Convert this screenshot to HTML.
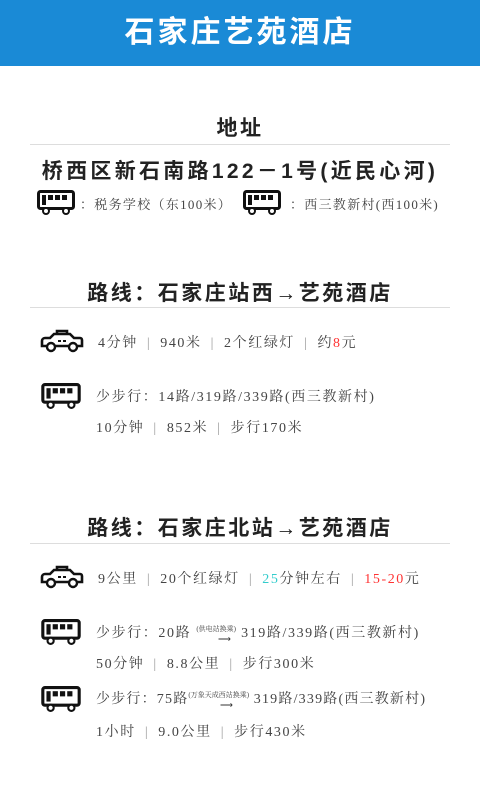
<!DOCTYPE html><html><head><meta charset="utf-8"><style>
body{margin:0;width:480px;height:800px;background:#fff;position:relative;overflow:hidden;font-family:"Liberation Serif","Noto Serif CJK SC",serif;color:#333}
.hd{position:absolute;left:0;top:0;width:480px;height:66px;background:#1a8ad6;color:#fff;font:bold 30px "Liberation Sans","Noto Sans CJK SC",sans-serif;text-align:center;line-height:66px;letter-spacing:3px}
.a{position:absolute;white-space:nowrap}
.h{font:bold 21px "Liberation Sans","Noto Sans CJK SC",sans-serif;color:#222;left:0;width:480px;text-align:center;letter-spacing:2.5px}
.ln{position:absolute;left:30px;width:420px;height:1px;background:#ddd}
.t{font-size:14px;color:#444;letter-spacing:1.6px}
.s{color:#999;margin:0 9px}
.sm{font-size:7px;position:relative;top:-6px;letter-spacing:0}
</style></head><body>
<div class="hd">石家庄艺苑酒店</div>
<div class="a h" style="top:112px">地址</div>
<div class="ln" style="top:144px"></div>
<div class="a h" style="top:155px;font-size:21px;letter-spacing:3.3px">桥西区新石南路122－1号(近民心河)</div>
<svg class="a" style="left:37px;top:190px" width="38" height="26" viewBox="0 0 38 26"><rect x="1.5" y="1.5" width="35" height="17" rx="2" fill="none" stroke="#111" stroke-width="3"/><rect x="5" y="5" width="4" height="10" fill="#111"/><rect x="11" y="5" width="5" height="5" fill="#111"/><rect x="18" y="5" width="5" height="5" fill="#111"/><rect x="25" y="5" width="5" height="5" fill="#111"/><circle cx="9" cy="21" r="3" fill="#fff" stroke="#111" stroke-width="2"/><circle cx="29" cy="21" r="3" fill="#fff" stroke="#111" stroke-width="2"/></svg>
<div class="a t" style="left:80px;top:194px;font-size:13px;letter-spacing:1.3px">：税务学校（东100米）</div>
<svg class="a" style="left:243px;top:190px" width="38" height="26" viewBox="0 0 38 26"><rect x="1.5" y="1.5" width="35" height="17" rx="2" fill="none" stroke="#111" stroke-width="3"/><rect x="5" y="5" width="4" height="10" fill="#111"/><rect x="11" y="5" width="5" height="5" fill="#111"/><rect x="18" y="5" width="5" height="5" fill="#111"/><rect x="25" y="5" width="5" height="5" fill="#111"/><circle cx="9" cy="21" r="3" fill="#fff" stroke="#111" stroke-width="2"/><circle cx="29" cy="21" r="3" fill="#fff" stroke="#111" stroke-width="2"/></svg>
<div class="a t" style="left:290px;top:194px;font-size:13px;letter-spacing:1.3px">：西三教新村(西100米)</div>

<div class="a h" style="top:277px">路线：石家庄站西→艺苑酒店</div>
<div class="ln" style="top:307px"></div>
<svg class="a" style="left:40px;top:328px" width="44" height="25" viewBox="0 0 44 25"><path d="M17 6V3h10v3M10 10l4-4h16l4 4h6a2 2 0 0 1 2 2v6H2v-5a3 3 0 0 1 3-3z" fill="none" stroke="#111" stroke-width="2.6"/><rect x="18" y="12" width="3" height="2" fill="#111"/><rect x="23" y="12" width="3" height="2" fill="#111"/><circle cx="11" cy="19" r="4" fill="#fff" stroke="#111" stroke-width="2.4"/><circle cx="33" cy="19" r="4" fill="#fff" stroke="#111" stroke-width="2.4"/></svg>
<div class="a t" style="left:98px;top:332px">4分钟<span class="s">|</span>940米<span class="s">|</span>2个红绿灯<span class="s">|</span>约<span style="color:#f33">8</span>元</div>
<svg class="a" style="left:41px;top:383px" width="40" height="27" viewBox="0 0 38 26"><rect x="1.5" y="1.5" width="35" height="17" rx="2" fill="none" stroke="#111" stroke-width="3"/><rect x="5" y="5" width="4" height="10" fill="#111"/><rect x="11" y="5" width="5" height="5" fill="#111"/><rect x="18" y="5" width="5" height="5" fill="#111"/><rect x="25" y="5" width="5" height="5" fill="#111"/><circle cx="9" cy="21" r="3" fill="#fff" stroke="#111" stroke-width="2"/><circle cx="29" cy="21" r="3" fill="#fff" stroke="#111" stroke-width="2"/></svg>
<div class="a t" style="left:96px;top:386px">少步行：14路/319路/339路(西三教新村)</div>
<div class="a t" style="left:96px;top:417px">10分钟<span class="s">|</span>852米<span class="s">|</span>步行170米</div>

<div class="a h" style="top:512px">路线：石家庄北站→艺苑酒店</div>
<div class="ln" style="top:543px"></div>
<svg class="a" style="left:40px;top:564px" width="44" height="25" viewBox="0 0 44 25"><path d="M17 6V3h10v3M10 10l4-4h16l4 4h6a2 2 0 0 1 2 2v6H2v-5a3 3 0 0 1 3-3z" fill="none" stroke="#111" stroke-width="2.6"/><rect x="18" y="12" width="3" height="2" fill="#111"/><rect x="23" y="12" width="3" height="2" fill="#111"/><circle cx="11" cy="19" r="4" fill="#fff" stroke="#111" stroke-width="2.4"/><circle cx="33" cy="19" r="4" fill="#fff" stroke="#111" stroke-width="2.4"/></svg>
<div class="a t" style="left:98px;top:568px">9公里<span class="s">|</span>20个红绿灯<span class="s">|</span><span style="color:#3cc">25</span>分钟左右<span class="s">|</span><span style="color:#f33">15-20</span>元</div>
<svg class="a" style="left:41px;top:619px" width="40" height="27" viewBox="0 0 38 26"><rect x="1.5" y="1.5" width="35" height="17" rx="2" fill="none" stroke="#111" stroke-width="3"/><rect x="5" y="5" width="4" height="10" fill="#111"/><rect x="11" y="5" width="5" height="5" fill="#111"/><rect x="18" y="5" width="5" height="5" fill="#111"/><rect x="25" y="5" width="5" height="5" fill="#111"/><circle cx="9" cy="21" r="3" fill="#fff" stroke="#111" stroke-width="2"/><circle cx="29" cy="21" r="3" fill="#fff" stroke="#111" stroke-width="2"/></svg>
<div class="a t" style="left:96px;top:622px">少步行：20路 <span class="sm">(供电站换乘)</span> 319路/339路(西三教新村)</div>
<div class="a" style="left:218px;top:634px;font-size:9px">⟶</div>
<div class="a t" style="left:96px;top:653px">50分钟<span class="s">|</span>8.8公里<span class="s">|</span>步行300米</div>
<svg class="a" style="left:41px;top:686px" width="40" height="27" viewBox="0 0 38 26"><rect x="1.5" y="1.5" width="35" height="17" rx="2" fill="none" stroke="#111" stroke-width="3"/><rect x="5" y="5" width="4" height="10" fill="#111"/><rect x="11" y="5" width="5" height="5" fill="#111"/><rect x="18" y="5" width="5" height="5" fill="#111"/><rect x="25" y="5" width="5" height="5" fill="#111"/><circle cx="9" cy="21" r="3" fill="#fff" stroke="#111" stroke-width="2"/><circle cx="29" cy="21" r="3" fill="#fff" stroke="#111" stroke-width="2"/></svg>
<div class="a t" style="left:96px;top:688px;letter-spacing:1.2px">少步行：75路<span class="sm">(万象天成西站换乘)</span> 319路/339路(西三教新村)</div>
<div class="a" style="left:220px;top:700px;font-size:9px">⟶</div>
<div class="a t" style="left:96px;top:721px">1小时<span class="s">|</span>9.0公里<span class="s">|</span>步行430米</div>
</body></html>
